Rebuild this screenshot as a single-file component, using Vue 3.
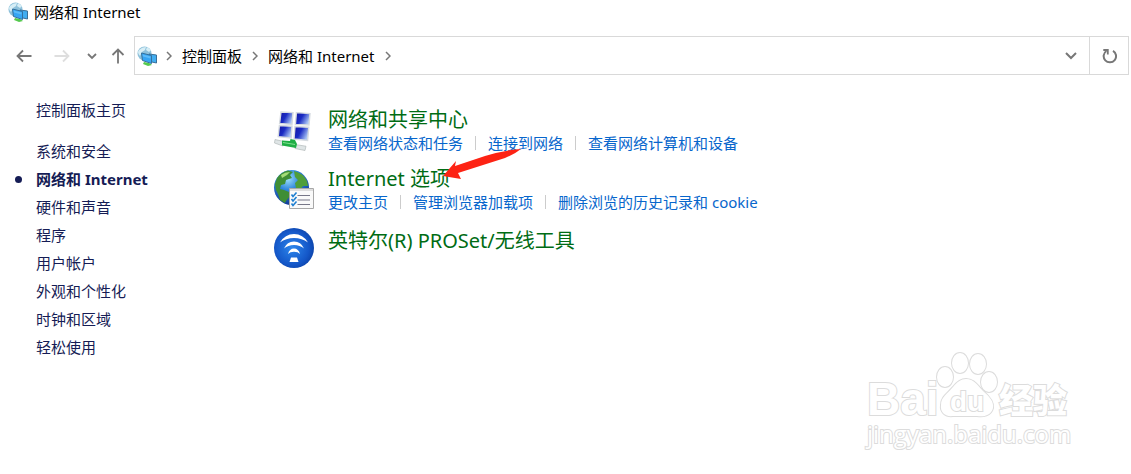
<template>
  <div class="window">
    <header class="title-bar">
      <svg class="network-icon" viewBox="0 0 20 20" aria-hidden="true">
        <use href="#network" />
      </svg>
      <span>网络和 Internet</span>
    </header>

    <div class="nav-bar">
      <div class="nav-buttons">
        <button class="nav-button" type="button" aria-label="后退">
          <svg width="16" height="14" viewBox="0 0 16 14">
            <path d="M15.5 7H1.5M7 1.5L1.5 7L7 12.5" fill="none" stroke="#777" stroke-width="1.8" />
          </svg>
        </button>
        <button class="nav-button forward" type="button" aria-label="前进" disabled>
          <svg width="16" height="14" viewBox="0 0 16 14">
            <path d="M0.5 7H14.5M9 1.5L14.5 7L9 12.5" fill="none" stroke="#dedede" stroke-width="1.8" />
          </svg>
        </button>
        <button class="nav-button recent" type="button" aria-label="最近浏览的位置">
          <svg width="10" height="8" viewBox="0 0 10 8">
            <path d="M1 2L5 6L9 2" fill="none" stroke="#777" stroke-width="1.8" />
          </svg>
        </button>
        <button class="nav-button up" type="button" aria-label="上移">
          <svg width="14" height="16" viewBox="0 0 14 16">
            <path d="M7 15.5V1.5M1.5 7L7 1.5L12.5 7" fill="none" stroke="#777" stroke-width="1.8" />
          </svg>
        </button>
      </div>

      <div class="address-bar">
        <nav class="breadcrumb">
          <svg class="network-icon" viewBox="0 0 20 20" aria-hidden="true">
            <use href="#network" />
          </svg>
          <svg class="chevron" viewBox="0 0 6 10"><path d="M1 1L5 5L1 9" /></svg>
          <template v-for="crumb in crumbs" :key="crumb">
            <a href="#">{{ crumb }}</a>
            <svg class="chevron" viewBox="0 0 6 10"><path d="M1 1L5 5L1 9" /></svg>
          </template>
        </nav>
        <button class="history" type="button" aria-label="以前的位置">
          <svg width="12" height="8" viewBox="0 0 12 8">
            <path d="M1 1L6 6L11 1" fill="none" stroke="#777" stroke-width="2" />
          </svg>
        </button>
        <button class="refresh" type="button" aria-label="刷新">
          <svg width="16" height="16" viewBox="0 0 16 16">
            <path d="M12 2.8A6.2 6.2 0 1 1 5.400 3" fill="none" stroke="#777" stroke-width="2" />
            <path d="M2.300 2H6.800V6.400" fill="none" stroke="#777" stroke-width="1.8" />
          </svg>
        </button>
      </div>
    </div>

    <div class="body">
      <aside class="sidebar">
        <a class="home" href="#">控制面板主页</a>
        <ul>
          <li v-for="item in categories" :key="item" :class="{ active: item === current }">
            <a href="#">{{ item }}</a>
          </li>
        </ul>
      </aside>

      <main class="content">
        <section class="group">
          <svg class="group-icon" viewBox="0 0 42 42" aria-hidden="true">
            <defs>
              <linearGradient id="screen" x1="0" y1="0" x2="1" y2="0.5">
                <stop offset="0" stop-color="#1414a0" />
                <stop offset="0.5" stop-color="#1a2cc4" />
                <stop offset="1" stop-color="#a9c4f4" />
              </linearGradient>
            </defs>
            <g fill="url(#screen)" stroke="#d6dbe0" stroke-width="1.4">
              <path d="M8 3L20 3.600L19 15.400L6.600 14.400Z" />
              <path d="M23.400 3.600L37 4.600L36 16L22.400 15.400Z" />
              <path d="M6.400 16.500L19 17.200L18.200 29L5.200 27.600Z" />
              <path d="M22 17.500L35.800 18.200L34.600 31.400L21 30Z" />
            </g>
            <path d="M2 30.500L11 32.500L10 37L1.500 34Z" fill="#dfe5e6" stroke="#a8b0b0" stroke-width="0.600" />
            <path d="M22 35.500L33 37.200L32 41.500L22 39.500Z" fill="#dfe5e6" stroke="#a8b0b0" stroke-width="0.600" />
            <path d="M9 31.500L17 32L17.500 30L22 31L24 35L23 39L9 36.500Z" fill="#1fae45" />
            <path d="M10 33.500L22 35.500" stroke="#7fdf8e" stroke-width="1" />
          </svg>
          <div>
            <h2><a href="#">网络和共享中心</a></h2>
            <p class="tasks">
              <a v-for="task in networkTasks" :key="task" href="#">{{ task }}</a>
            </p>
          </div>
        </section>

        <section class="group">
          <svg class="group-icon" viewBox="0 0 42 42" aria-hidden="true">
            <defs>
              <radialGradient id="globe" cx="0.4" cy="0.25" r="0.8">
                <stop offset="0" stop-color="#9fe0fa" />
                <stop offset="0.4" stop-color="#2f86dc" />
                <stop offset="1" stop-color="#0c2f8c" />
              </radialGradient>
            </defs>
            <circle cx="18.500" cy="19.500" r="17.500" fill="url(#globe)" />
            <path d="M4 10Q8 4 15 2.500L20 4L17 7L19 10L13 12L12 16L8 17L7 21L11 22L16 24L17 28L13 33L12 35L7 32L5 26L3 22L2 16Z" fill="#3f8e35" />
            <path d="M21 3Q30 5 34 13L35 18L30 18L27 22L23 20L22 15L25 12L22 9Z" fill="#4f9e3a" />
            <path d="M8 7Q12 4 17 4L14 7L9 10Z" fill="#a5dc78" />
            <path d="M16.500 20.500H40.500V40.500H16.500Z" fill="#fafafa" stroke="#a8a8a8" />
            <path d="M17 21H40V23H17Z" fill="#dedede" />
            <path d="M24.500 27.500H37M24.500 32H37M24.500 36.500H37" stroke="#777788" />
            <path d="M18.500 26.500L20 28.500L23.500 24.500M18.500 31L20 33L23.500 29M18.500 35.500L20 37.500L23.500 33.500" fill="none" stroke="#1f7fd0" stroke-width="1.600" />
          </svg>
          <div>
            <h2><a href="#">Internet 选项</a></h2>
            <p class="tasks">
              <a v-for="task in internetTasks" :key="task" href="#">{{ task }}</a>
            </p>
          </div>
          <svg class="arrow" viewBox="0 0 80 32" aria-hidden="true">
            <path d="M0 27L13 12L12 17L42 7Q62 1 78 0Q72 5 62 9L15 24L18 30Z" fill="#fd2314" />
          </svg>
        </section>

        <section class="group single">
          <svg class="group-icon" viewBox="0 0 42 42" aria-hidden="true">
            <defs>
              <radialGradient id="wifi" cx="0.45" cy="0.5" r="0.6">
                <stop offset="0" stop-color="#2c86ec" />
                <stop offset="0.700" stop-color="#1457c8" />
                <stop offset="1" stop-color="#0b3fa2" />
              </radialGradient>
            </defs>
            <circle cx="21" cy="21" r="20" fill="url(#wifi)" />
            <g fill="#fff">
              <path d="M7 15.500Q12 7 21 7Q30 7 35 15.500Q29 11 21 11Q13 11 7 15.500Z" />
              <path d="M11 21.500Q14 14.500 21 14.500Q28 14.500 31 21.500Q27 18 21 18Q15 18 11 21.500Z" />
              <path d="M15 27Q16.500 21.500 21 21.500Q25.500 21.500 27 27Q25 24.700 21 24.700Q17 24.700 15 27Z" />
              <path d="M18 30.500H24L25.500 35H16.500Z" />
            </g>
          </svg>
          <h2><a href="#">英特尔(R) PROSet/无线工具</a></h2>
        </section>
      </main>
    </div>

    <svg class="watermark" viewBox="0 0 210 106" role="img" aria-label="Baidu 经验">
      <g class="outline">
        <text class="latin" x="3" y="67">Bai</text>
        <ellipse cx="81" cy="29" rx="8" ry="10" />
        <ellipse cx="96" cy="15" rx="8" ry="10" />
        <ellipse cx="114" cy="16" rx="8" ry="10" />
        <ellipse cx="125" cy="34" rx="8" ry="10" />
        <path d="M102 31C110 31 113 37 119 43C126 49 130 54 129 60C127 68 119 69 113 68H89C81 69 76 64 77 57C77 49 83 46 89 39C93 34 97 31 102 31Z" />
        <text class="du" x="86" y="63">du</text>
        <text class="cjk" x="135" y="65">经验</text>
        <text class="site" x="3" y="95">jingyan.baidu.com</text>
      </g>
    </svg>

    <!-- shared by the title bar and the address bar -->
    <svg class="symbols" aria-hidden="true">
      <symbol id="network" viewBox="0 0 20 20">
        <circle cx="7.500" cy="7.500" r="7" fill="#8cc0da" />
        <path d="M2 4Q5 1 9 1L8 4L5 6L3 10Q1 8 1 6ZM10 1L14 4L12 6L9 4Z" fill="#d7eef6" />
        <path d="M7 16L12 17L15 19L11 20L6 18Z" fill="#55c94e" />
        <path d="M12 8L19.500 9V17L12.500 15.500Z" fill="#42adf0" stroke="#3a6f98" />
        <path d="M4.500 7L14.500 9.500V17.500L5.500 14.500Z" fill="#35a5f4" stroke="#34719e" />
        <path d="M5.500 8.500L13.500 10.500V12.500L6 10.500Z" fill="#5dbcf9" />
      </symbol>
    </svg>
  </div>
</template>

<script setup>
import { ref } from 'vue';

const crumbs = ['控制面板', '网络和 Internet'];

const current = ref('网络和 Internet');
const categories = [
  '系统和安全',
  '网络和 Internet',
  '硬件和声音',
  '程序',
  '用户帐户',
  '外观和个性化',
  '时钟和区域',
  '轻松使用',
];

const networkTasks = ['查看网络状态和任务', '连接到网络', '查看网络计算机和设备'];
const internetTasks = ['更改主页', '管理浏览器加载项', '删除浏览的历史记录和 cookie'];
</script>

<style>
body {
  margin: 0;
  background: #fff;
}
</style>

<style scoped>
.window {
  position: relative;
  min-height: 100vh;
  font-family: "Noto Sans", "Noto Sans CJK SC", sans-serif;
  font-size: 15px;
  font-weight: 374;
  line-height: 20px;
  color: #000;
}

a {
  color: inherit;
  text-decoration: none;
}

button {
  display: flex;
  align-items: center;
  justify-content: center;
  padding: 0;
  border: 0;
  background: none;
}

.symbols {
  position: absolute;
  width: 0;
  height: 0;
}

.network-icon {
  flex: none;
  width: 20px;
  height: 20px;
}

.title-bar {
  display: flex;
  align-items: center;
  gap: 6px;
  height: 24px;
  padding-left: 8px;
}

.nav-bar {
  display: flex;
  margin-top: 12px;
  padding-right: 2px;
}

.nav-buttons {
  display: flex;
  align-items: center;
  width: 134px;
  padding-left: 12px;
  box-sizing: border-box;
}

.nav-button {
  width: 24px;
  height: 24px;
}

.forward {
  margin-left: 14px;
}

.recent {
  width: 20px;
  margin-left: 8px;
}

.up {
  width: 20px;
  margin-left: 6px;
}

.address-bar {
  display: flex;
  flex: 1;
  height: 37px;
  border: 1px solid #d9d9d9;
}

.breadcrumb {
  display: flex;
  flex: 1;
  align-items: center;
  padding-left: 2px;
}

.breadcrumb a {
  margin: 0 10px;
}

.breadcrumb .network-icon {
  margin-right: 9px;
}

.chevron {
  width: 6px;
  height: 10px;
  fill: none;
  stroke: #777;
  stroke-width: 1.5;
}

.history {
  width: 36px;
}

.refresh {
  width: 39px;
  border-left: 1px solid #d9d9d9;
}

.body {
  display: flex;
}

.sidebar {
  width: 273px;
  padding: 25px 0 0 36px;
  box-sizing: border-box;
  color: #151c55;
}

.home {
  display: block;
}

.sidebar ul {
  margin: 17px 0 0;
  padding: 0;
  list-style: none;
}

.sidebar li {
  position: relative;
  line-height: 28px;
}

.sidebar .active {
  font-weight: 700;
}

.active::before {
  content: '';
  position: absolute;
  left: -21px;
  top: 11px;
  width: 7px;
  height: 7px;
  border-radius: 50%;
  background: #151c55;
}

.content {
  display: flex;
  flex: 1;
  flex-direction: column;
  gap: 13px;
  padding-top: 33px;
}

.group {
  position: relative;
  display: flex;
  gap: 13px;
}

.group-icon {
  flex: none;
  width: 42px;
  height: 42px;
  margin-top: 1px;
}

.group h2 {
  margin: 0;
  font-size: 20px;
  font-weight: 374;
  line-height: 24px;
  color: #006c14;
}

.single h2 {
  line-height: 30px;
}

.tasks {
  display: flex;
  margin: 0;
  line-height: 22px;
  color: #0766cc;
}

.tasks a + a {
  position: relative;
  margin-left: 25px;
}

.tasks a + a::before {
  content: '';
  position: absolute;
  left: -13px;
  top: 4px;
  width: 1px;
  height: 14px;
  background: #ccc;
}

.arrow {
  position: absolute;
  left: 170px;
  top: -18px;
  width: 80px;
  height: 32px;
}

.watermark {
  position: absolute;
  right: 57px;
  bottom: 20px;
  width: 210px;
  height: 106px;
}

.outline {
  fill: #fff;
  stroke: #dcdcdc;
  stroke-width: 2px;
  paint-order: stroke;
}

.latin {
  font: 700 46px "Liberation Sans", Arial, sans-serif;
}

.du {
  font: 700 28px "Liberation Sans", Arial, sans-serif;
}

.cjk {
  font: 900 34px "Noto Sans CJK SC", sans-serif;
}

.site {
  font: 400 24px "Open Sans", sans-serif;
}
</style>
